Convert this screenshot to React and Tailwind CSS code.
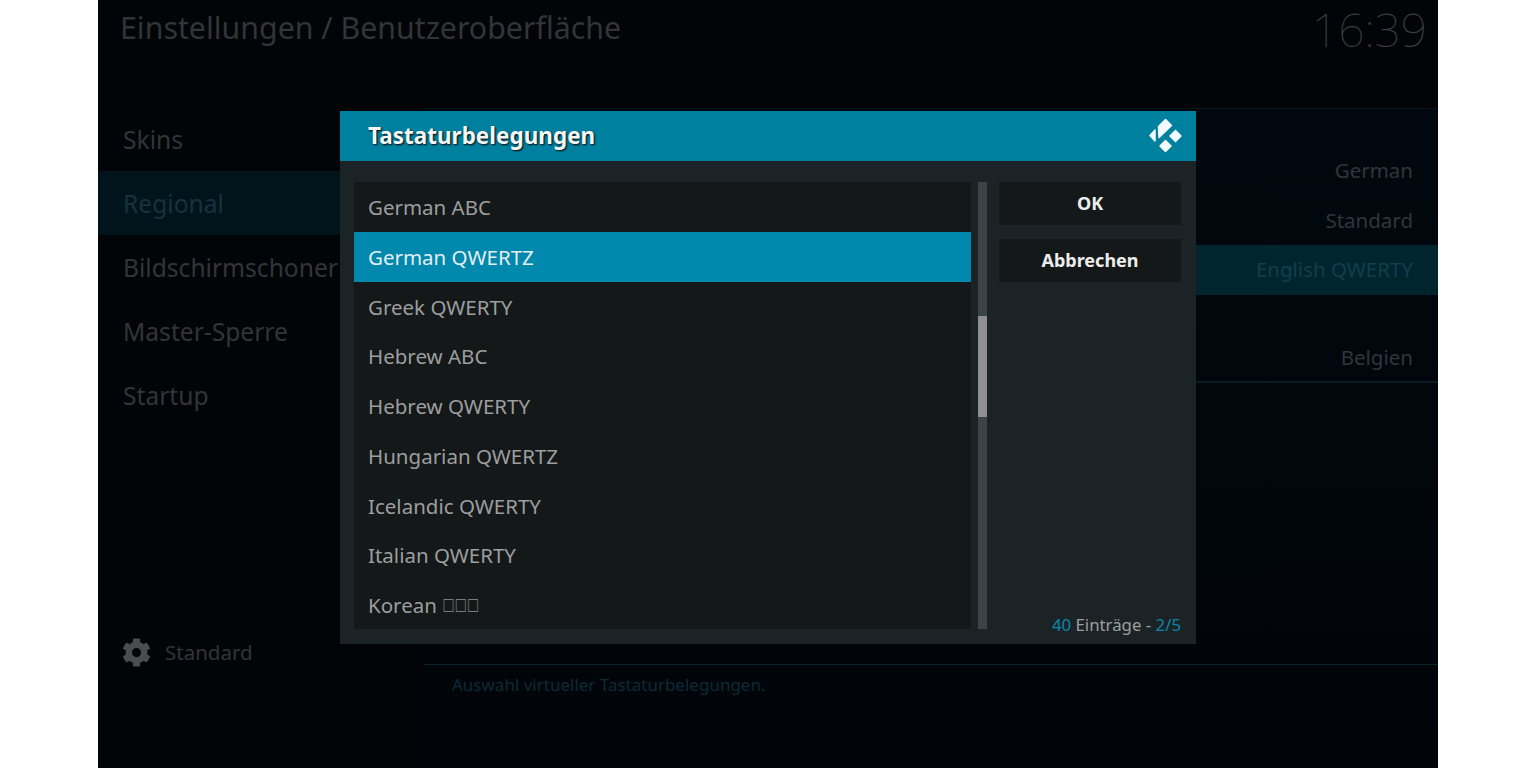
import { FaCog } from 'react-icons/fa';

const menu = ['Skins', 'Regional', 'Bildschirmschoner', 'Master-Sperre', 'Startup'];
const layouts = ['German ABC', 'German QWERTZ', 'Greek QWERTY', 'Hebrew ABC', 'Hebrew QWERTY', 'Hungarian QWERTZ', 'Icelandic QWERTY', 'Italian QWERTY'];

function KodiLogo() {
  return (
    <svg viewBox="0 0 36 38" className="w-9 h-[38px]" fill="#f2fbff" stroke="#f2fbff" strokeWidth="1.5" strokeLinejoin="round">
      <path d="M7 13 L2 18.5 L7 24 Z" />
      <path d="M17.5 2.5 L23.5 8.5 L11 20.5 L10.5 9.5 Z" />
      <path d="M27.5 13.5 L33 19 L27.5 24.5 L22 19 Z" />
      <path d="M17.5 23.5 L23 29 L17.5 34.5 L12 29 Z" />
    </svg>
  );
}

function SettingRow({ label, active, line, className = 'h-[50px]' }) {
  return (
    <div className={`${className} flex items-center justify-end pr-[25px] text-[20.5px] ${active ? 'bg-[#01252f] text-[#0f3f4c]' : 'text-[#30363a]'} ${line ? 'border-b-2 border-[#0a1a22]' : ''}`}>
      {label}
    </div>
  );
}

export default function App() {
  return (
    <div className="relative h-[768px] w-full overflow-hidden bg-white font-['Noto_Sans',sans-serif]">
      <div className="ml-[98px] w-[1340px] h-full bg-[#020407] flex flex-col">
        <header className="h-[108px] shrink-0 flex justify-between pl-[22px] pr-[11px]">
          <h1 className="mt-[7px] text-[30.3px] leading-[42px] text-[#313538]">Einstellungen / Benutzeroberfläche</h1>
          <div className="whitespace-nowrap text-[46px] leading-[58px] font-thin text-[#3a3e41]">16:39</div>
        </header>

        <div className="flex flex-1 min-h-0">
          <aside className="w-[326px] shrink-0 flex flex-col">
            <nav className="-mt-px">
              {menu.map((item) => (
                <div key={item} className={`h-[64px] pt-[3px] flex items-center pl-[25px] text-[24.6px] ${item === 'Regional' ? 'bg-[#01141c] text-[#15333d]' : 'text-[#323538]'}`}>
                  {item}
                </div>
              ))}
            </nav>
            <div className="mt-[210px] flex items-center gap-[14px] pl-[24px] h-[30px] text-[20.5px] text-[#323538]">
              <FaCog className="w-[29px] h-[29px] text-[#4a4c4e]" />
              Standard
            </div>
          </aside>

          <main className="flex-1 flex flex-col bg-gradient-to-b from-[#01080f] to-[#010509] border-t border-[#07151d]">
            <div className="mt-[37px] h-[149px]">
              <SettingRow label="German" className="h-[50px] pb-[2px]" />
              <SettingRow label="Standard" className="h-[49px]" />
              <SettingRow label="English QWERTY" active className="h-[50px] pb-[2px]" />
            </div>
            <div className="mt-[38px]">
              <SettingRow label="Belgien" line />
            </div>
            <div className="mt-[281px] border-t border-[#06202c] pl-[28px] pt-[7px] text-[17px] text-[#0b2a36]">
              Auswahl virtueller Tastaturbelegungen.
            </div>
          </main>
        </div>
      </div>

      <div className="absolute left-[340px] top-[111px] w-[856px] h-[533px] bg-[#1c2326] flex flex-col">
        <div className="h-[50px] shrink-0 bg-[#00809f] flex items-center justify-between pl-[28px] pr-[12px]">
          <h2 className="-mt-[1px] text-[22.5px] font-bold text-[#f4f6f7] [text-shadow:1px_1px_2px_#000]">Tastaturbelegungen</h2>
          <KodiLogo />
        </div>

        <div className="flex flex-1 min-h-0 pt-[21px] pb-[15px] pl-[14px] pr-[15px]">
          <div className="w-[617px] bg-[#151819] flex flex-col overflow-hidden">
            {layouts.map((name) => (
              <div key={name} className={`h-[49.75px] pt-[1px] shrink-0 flex items-center pl-[14px] text-[20.5px] ${name === 'German QWERTZ' ? 'bg-[#0088ad] text-[#e4eef1]' : 'text-[#9c9e9f]'}`}>
                {name}
              </div>
            ))}
            <div className="h-[49.75px] shrink-0 flex items-center pl-[14px] text-[20.5px] text-[#9c9e9f]">
              Korean&nbsp;<span className="inline-block scale-y-[1.35] font-['DejaVu_Sans',sans-serif] text-[13px] text-[#77797a]">□□□</span>
            </div>
          </div>

          <div className="ml-[7px] w-[9px] bg-[#3c4346]">
            <div className="mt-[134px] h-[101px] bg-[#8d8f91]" />
          </div>

          <div className="ml-[12px] flex-1 flex flex-col">
            <button className="h-[43px] bg-[#151819] text-[18px] font-bold text-[#eceded]">OK</button>
            <button className="mt-[14px] h-[43px] bg-[#151819] text-[18px] font-bold text-[#eceded]">Abbrechen</button>
            <div className="mt-auto -mb-[8px] text-right text-[16.8px] leading-[24px] text-[#9c9e9f]">
              <span className="text-[#0b86a8]">40</span> Einträge - <span className="text-[#0b86a8]">2/5</span>
            </div>
          </div>
        </div>
      </div>
    </div>
  );
}
